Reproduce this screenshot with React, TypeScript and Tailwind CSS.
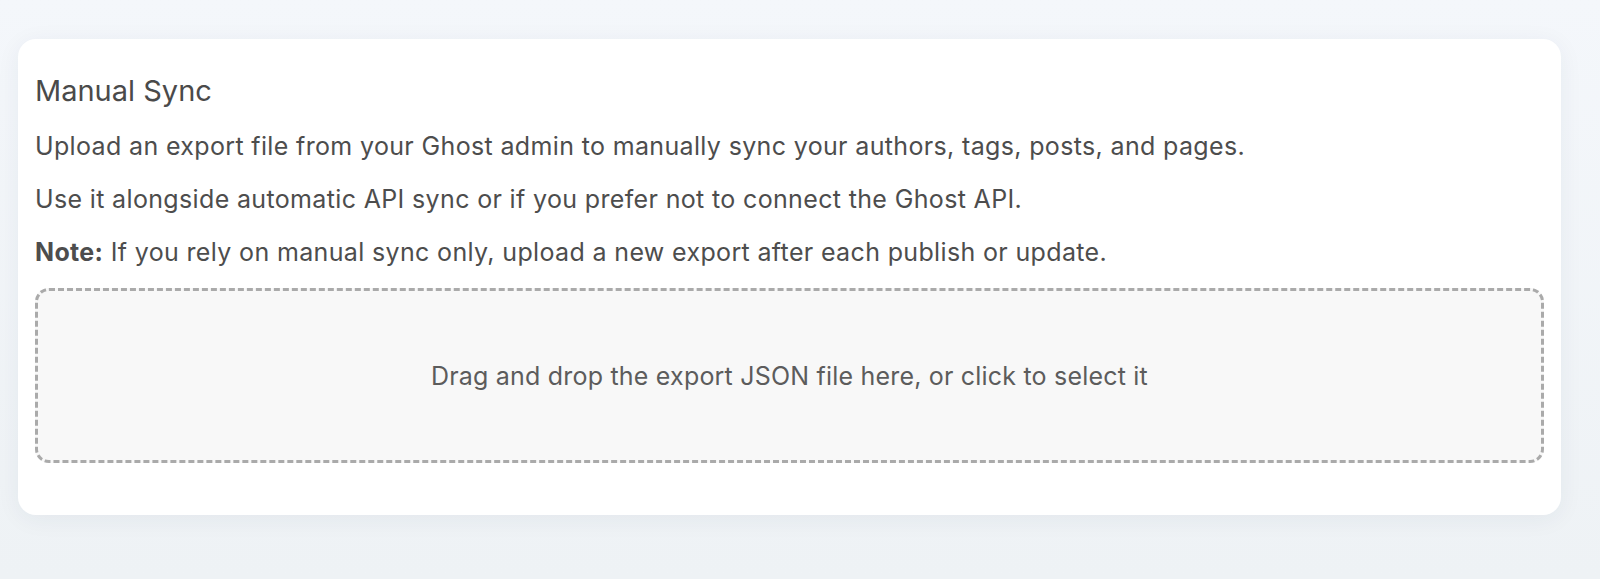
import React from "react";

export default function App() {
  return (
    <div
      className="min-h-[579px] w-full bg-gradient-to-b from-[#f4f7fb] to-[#eef2f5] pt-[39px] pl-[18px] pr-[39px] pb-[64px]"
      style={{ fontFamily: "Inter, 'Noto Sans', sans-serif" }}
    >
      <div className="rounded-[18px] bg-white px-[17px] pt-[35px] pb-[52px] shadow-[0_4px_24px_rgba(30,50,80,0.06)]">
        <h2 className="text-[29px] leading-[34px] font-normal text-[#4a4a4a]">
          Manual Sync
        </h2>
        <div className="mt-[20px] flex flex-col gap-[17px] text-[25px] leading-[36px] text-[#4d4d4d] tracking-[0.35px]">
          <p>
            Upload an export file from your Ghost admin to manually sync your
            authors, tags, posts, and pages.
          </p>
          <p>
            Use it alongside automatic API sync or if you prefer not to connect
            the Ghost API.
          </p>
          <p>
            <strong className="font-bold">Note:</strong> If you rely on manual
            sync only, upload a new export after each publish or update.
          </p>
        </div>
        <div className="mt-[18px] flex h-[175px] cursor-pointer items-center justify-center rounded-[14px] border-[3px] border-dashed border-[#aaaaaa] bg-[#f8f8f8]">
          <span className="text-[25px] leading-[36px] text-[#5c5c5c] tracking-[0.2px]">
            Drag and drop the export JSON file here, or click to select it
          </span>
        </div>
      </div>
    </div>
  );
}
